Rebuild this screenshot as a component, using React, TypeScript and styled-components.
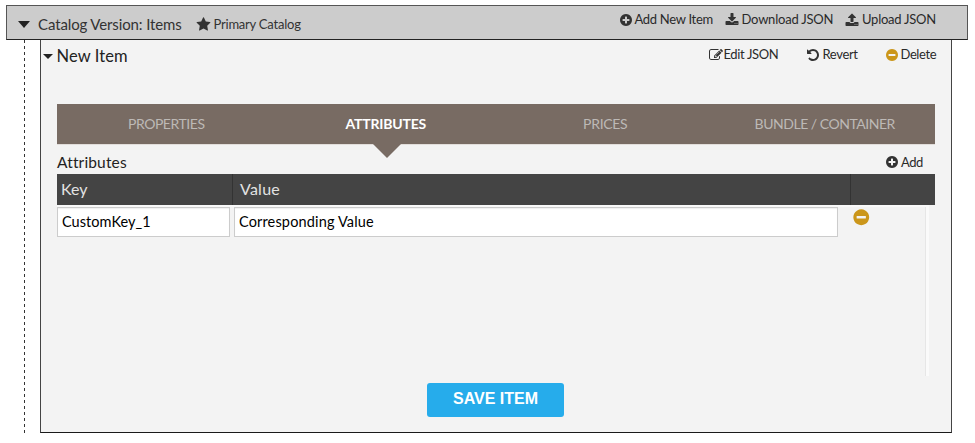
import React from "react";
import styled, { createGlobalStyle } from "styled-components";

const GlobalStyle = createGlobalStyle`
  * { box-sizing: border-box; }
  body { margin: 0; background: #fff; font-family: Lato, "Open Sans", sans-serif; color: #333; }
`;

const ICONS = {
  plus: "M1344 960v-128q0-26-19-45t-45-19h-256v-256q0-26-19-45t-45-19h-128q-26 0-45 19t-19 45v256h-256q-26 0-45 19t-19 45v128q0 26 19 45t45 19h256v256q0 26 19 45t45 19h128q26 0 45-19t19-45v-256h256q26 0 45-19t19-45zm320-64q0 209-103 385.5t-279.5 279.5-385.5 103-385.5-103-279.5-279.5-103-385.5 103-385.5 279.5-279.5 385.5-103 385.5 103 279.5 279.5 103 385.5z",
  minus: "M1344 960v-128q0-26-19-45t-45-19h-768q-26 0-45 19t-19 45v128q0 26 19 45t45 19h768q26 0 45-19t19-45zm320-64q0 209-103 385.5t-279.5 279.5-385.5 103-385.5-103-279.5-279.5-103-385.5 103-385.5 279.5-279.5 385.5-103 385.5 103 279.5 279.5 103 385.5z",
  download: "M1344 1344q0-26-19-45t-45-19-45 19-19 45 19 45 45 19 45-19 19-45zm256 0q0-26-19-45t-45-19-45 19-19 45 19 45 45 19 45-19 19-45zm128-224v320q0 40-28 68t-68 28h-1472q-40 0-68-28t-28-68v-320q0-40 28-68t68-28h465l135 136q58 56 136 56t136-56l136-136h464q40 0 68 28t28 68zm-325-569q17 41-14 70l-448 448q-18 19-45 19t-45-19l-448-448q-31-29-14-70 17-39 59-39h256v-448q0-26 19-45t45-19h256q26 0 45 19t19 45v448h256q42 0 59 39z",
  upload: "M1344 1472q0-26-19-45t-45-19-45 19-19 45 19 45 45 19 45-19 19-45zm256 0q0-26-19-45t-45-19-45 19-19 45 19 45 45 19 45-19 19-45zm128-224v320q0 40-28 68t-68 28h-1472q-40 0-68-28t-28-68v-320q0-40 28-68t68-28h427q21 56 70.5 92t110.5 36h256q61 0 110.5-36t70.5-92h427q40 0 68 28t28 68zm-325-648q-17 40-59 40h-256v448q0 26-19 45t-45 19h-256q-26 0-45-19t-19-45v-448h-256q-42 0-59-40-17-39 14-69l448-448q18-19 45-19t45 19l448 448q31 30 14 69z",
  star: "M1728 647q0 22-26 48l-363 354 86 500q1 7 1 20 0 21-10.5 35.5t-30.5 14.5q-19 0-40-12l-449-236-449 236q-22 12-40 12-21 0-31.5-14.5t-10.5-35.5q0-6 2-20l86-500-364-354q-25-27-25-48 0-37 56-46l502-73 225-455q19-41 49-41t49 41l225 455 502 73q56 9 56 46z",
  edit: "M888 1184l116-116-152-152-116 116v56h96v96h56zm440-720q-16-16-33 1l-350 350q-17 17-1 33t33-1l350-350q17-17 1-33zm80 594v190q0 119-84.5 203.5t-203.5 84.5h-832q-119 0-203.5-84.5t-84.5-203.5v-832q0-119 84.5-203.5t203.5-84.5h832q63 0 117 25 15 7 18 23 3 17-9 29l-49 49q-14 14-32 8-23-6-45-6h-832q-66 0-113 47t-47 113v832q0 66 47 113t113 47h832q66 0 113-47t47-113v-126q0-13 9-22l64-64q15-15 35-7t20 29zm-96-738l288 288-672 672h-288v-288zm444 132l-92 92-288-288 92-92q28-28 68-28t68 28l152 152q28 28 28 68t-28 68z",
  undo: "M1664 896q0 156-61 298t-164 245-245 164-298 61q-172 0-327-72.5t-264-204.5q-7-10-6.5-22.5t8.5-20.5l137-138q10-9 25-9 16 2 23 12 73 95 179 147t225 52q104 0 198.5-40.5t163.5-109.5 109.5-163.5 40.5-198.5-40.5-198.5-109.5-163.5-163.5-109.5-198.5-40.5q-98 0-188 35.5t-160 101.5l137 138q31 30 14 69-17 40-59 40h-448q-26 0-45-19t-19-45v-448q0-42 40-59 39-17 69 14l130 129q107-101 244.5-156.5t284.5-55.5q156 0 298 61t245 164 164 245 61 298z",
};

const Svg = styled.svg<{ $size: number; $gold?: boolean }>`
  flex: none;
  display: block;
  width: ${(p) => p.$size}px;
  height: ${(p) => p.$size}px;
  fill: ${(p) => (p.$gold ? "#cb961a" : "#333")};
`;

function Icon({ name, size = 14, gold }: { name: keyof typeof ICONS; size?: number; gold?: boolean }) {
  return (
    <Svg $size={size} $gold={gold} viewBox="0 0 1792 1792">
      <path d={ICONS[name]} />
    </Svg>
  );
}

const Page = styled.div`
  width: 975px;
  height: 443px;
  padding: 5px 7px 0 6px;
  overflow: hidden;
`;

const CatalogBar = styled.header`
  display: flex;
  justify-content: space-between;
  height: 35px;
  border: 1px solid #555;
  border-bottom-color: #222;
  background: #ccc;
  padding: 0 31px 0 11px;
`;

const BarTitle = styled.div`
  display: flex;
  align-items: center;
  padding-top: 3px;
`;

const Caret = styled.i<{ $small?: boolean }>`
  border: solid transparent;
  border-width: ${(p) => (p.$small ? "5.5px 5px 0" : "7px 6px 0")};
  border-top-color: #222;
`;

const Text = styled.span<{ $size?: number; $spacing?: number; $width?: number; $gap?: number }>`
  flex: none;
  font-size: ${(p) => p.$size ?? 13}px;
  letter-spacing: ${(p) => p.$spacing ?? 0}px;
  width: ${(p) => (p.$width ? `${p.$width}px` : "auto")};
  margin-left: ${(p) => p.$gap ?? 0}px;
  line-height: 20px;
  white-space: nowrap;
`;

const Actions = styled.div<{ $gap: number }>`
  display: flex;
  align-items: center;
  gap: ${(p) => p.$gap}px;
  height: 28px;
`;

const Action = styled.div<{ $lift?: number }>`
  display: flex;
  align-items: center;
  height: 20px;
  color: #2a2a2a;
  ${Text} {
    margin-bottom: ${(p) => p.$lift ?? 2}px;
  }
`;

const Body = styled.div`
  display: flex;
  height: 393px;
`;

const TreeLine = styled.div`
  flex: none;
  width: 1px;
  margin: 0 15px 0 18px;
  background: repeating-linear-gradient(#333 0 3px, transparent 3px 6px);
`;

const ItemPanel = styled.section`
  width: 912px;
  border: 1px solid #444;
  border-top: 0;
  border-bottom-color: #1a1a1a;
  background: #f3f3f3;
`;

const ItemHeader = styled.div`
  display: flex;
  justify-content: space-between;
  height: 64px;
  padding: 1px 14px 0 2px;
`;

const ItemTitle = styled.div`
  display: flex;
  align-items: center;
  height: 30px;
  color: #222;
`;

const Content = styled.div`
  width: 878px;
  margin-left: 16px;
`;

const Tabs = styled.nav`
  display: grid;
  grid-template-columns: repeat(4, 1fr);
  height: 41px;
  background: #786b63;
  border-bottom: 1px solid #e2dedb;
`;

const Tab = styled.div<{ $active?: boolean; $spacing?: number }>`
  position: relative;
  padding-right: 1px;
  text-align: center;
  line-height: 40px;
  font-size: 14px;
  letter-spacing: ${(p) => p.$spacing ?? 0}px;
  font-weight: ${(p) => (p.$active ? 700 : 400)};
  color: ${(p) => (p.$active ? "#fff" : "#bdb9b6")};
  &::after {
    content: "";
    display: ${(p) => (p.$active ? "block" : "none")};
    position: absolute;
    top: 40px;
    left: calc(50% - 13.25px);
    border: 14px solid transparent;
    border-top-color: #786b63;
    border-bottom: 0;
  }
`;

const Caption = styled.div`
  display: flex;
  justify-content: space-between;
  align-items: center;
  height: 29px;
  padding: 5px 12px 0 0;
  color: #222;
`;

const TableHead = styled.div`
  display: grid;
  grid-template-columns: 176px 618px 84px;
  height: 31px;
  background: #444;
`;

const HeadCell = styled.div<{ $pad?: number; $last?: boolean }>`
  padding-left: ${(p) => p.$pad ?? 0}px;
  padding-top: 5px;
  color: #e2e2e2;
  border-right: ${(p) => (p.$last ? "0" : "1px solid #333")};
`;

const Rows = styled.div`
  display: flex;
  align-items: flex-start;
  width: 872px;
  height: 171px;
  border-top: 2px solid #f9f9f9;
`;

const Field = styled.div<{ $width: number }>`
  flex: none;
  width: ${(p) => p.$width}px;
  height: 30px;
  margin-right: 4px;
  padding: 3px 4px;
  border: 1px solid #ccc;
  background: #fff;
  box-shadow: inset 0 1px 1px rgba(0, 0, 0, 0.06);
  color: #000;
`;

const RemoveSlot = styled.div`
  display: flex;
  padding: 1px 0 0 10px;
`;

const ScrollTrack = styled.div`
  align-self: stretch;
  width: 4px;
  margin-left: auto;
  background: #fafafa;
  border-left: 1px solid #e6e6e6;
`;

const SaveButton = styled.button`
  display: block;
  width: 137px;
  height: 34px;
  margin: 7px auto 0 370px;
  padding: 0 0 3px;
  border: 0;
  border-radius: 3px;
  background: #26aceb;
  color: #fff;
  font: bold 16px "Liberation Sans", Arial, sans-serif;
`;

export default function App() {
  return (
    <Page>
      <GlobalStyle />
      <CatalogBar>
        <BarTitle>
          <Caret />
          <Text $size={15} $width={158} $gap={8} $spacing={-0.12}>Catalog Version: Items</Text>
          <Icon name="star" size={15} />
          <Text $gap={2.5} $spacing={-0.22}>Primary Catalog</Text>
        </BarTitle>
        <Actions $gap={12}>
          <Action><Icon name="plus" /><Text $width={78.5} $gap={2} $spacing={-0.3}>Add New Item</Text></Action>
          <Action><Icon name="download" /><Text $width={91} $gap={2.5} $spacing={-0.22}>Download JSON</Text></Action>
          <Action><Icon name="upload" /><Text $width={74} $gap={3.5} $spacing={-0.25}>Upload JSON</Text></Action>
        </Actions>
      </CatalogBar>
      <Body>
        <TreeLine />
        <ItemPanel>
          <ItemHeader>
            <ItemTitle>
              <Caret $small />
              <Text $size={16.5} $gap={3.5} $spacing={0.1}>New Item</Text>
            </ItemTitle>
            <Actions $gap={26}>
              <Action><Icon name="edit" /><Text $width={56.5} $gap={0.5} $spacing={-0.36}>Edit JSON</Text></Action>
              <Action><Icon name="undo" /><Text $width={36.5} $gap={2.5} $spacing={-0.35}>Revert</Text></Action>
              <Action><Icon name="minus" gold /><Text $width={36.5} $gap={1.5} $spacing={-0.4}>Delete</Text></Action>
            </Actions>
          </ItemHeader>
          <Content>
            <Tabs>
              <Tab $spacing={-0.45}>PROPERTIES</Tab>
              <Tab $active $spacing={-0.2}>ATTRIBUTES</Tab>
              <Tab $spacing={-0.3}>PRICES</Tab>
              <Tab $spacing={-0.47}>BUNDLE / CONTAINER</Tab>
            </Tabs>
            <Caption>
              <Text $size={15.5} $spacing={0.15}>Attributes</Text>
              <Action $lift={0}><Icon name="plus" /><Text $gap={2} $width={22} $spacing={-0.5}>Add</Text></Action>
            </Caption>
            <TableHead>
              <HeadCell $pad={4}><Text $size={16}>Key</Text></HeadCell>
              <HeadCell $pad={7}><Text $size={16} $spacing={0.25}>Value</Text></HeadCell>
              <HeadCell $last />
            </TableHead>
            <Rows>
              <Field $width={173}><Text $size={14.5} $spacing={0.05}>CustomKey_1</Text></Field>
              <Field $width={604}><Text $size={14.5} $spacing={0.15}>Corresponding Value</Text></Field>
              <RemoveSlot><Icon name="minus" size={18.5} gold /></RemoveSlot>
              <ScrollTrack />
            </Rows>
            <SaveButton>SAVE ITEM</SaveButton>
          </Content>
        </ItemPanel>
      </Body>
    </Page>
  );
}
